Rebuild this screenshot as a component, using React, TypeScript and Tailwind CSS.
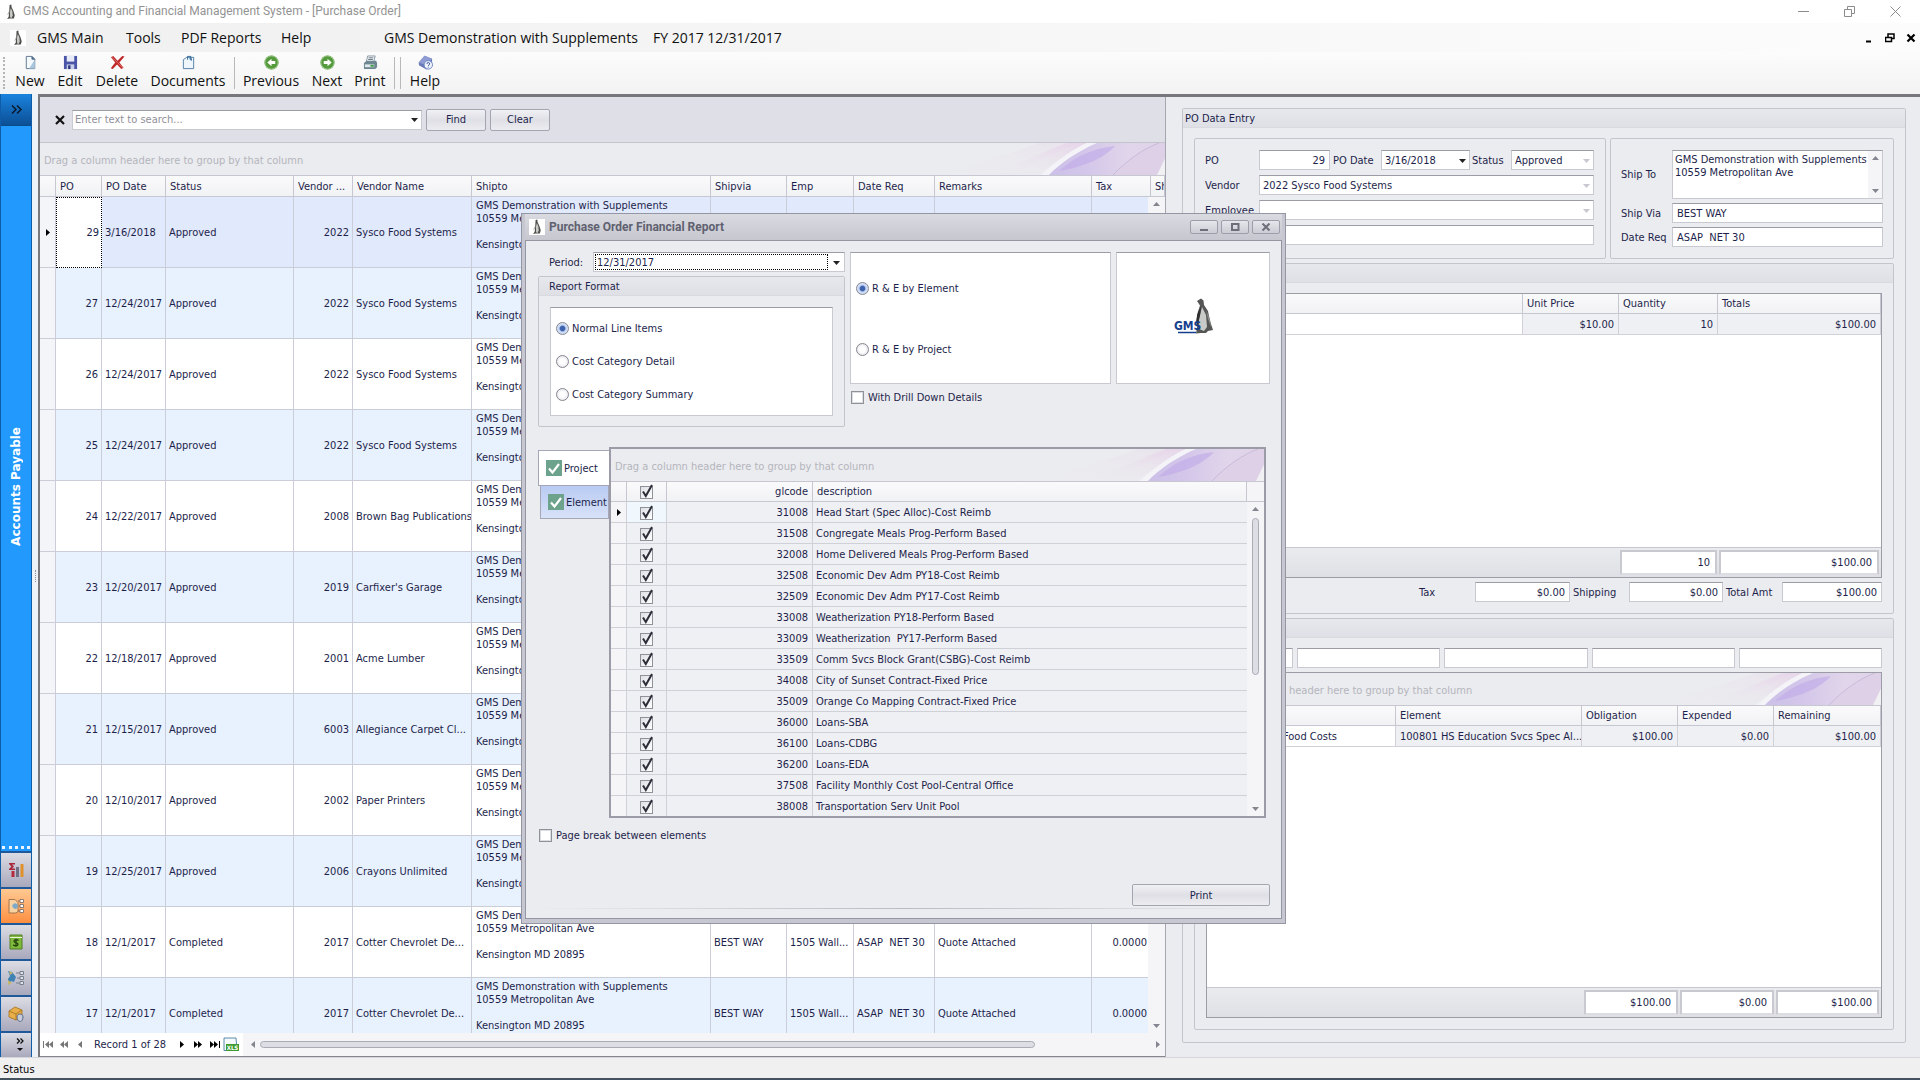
import type { ReactNode } from "react";

type Order = [string, string, string, string, string];

const orders: Order[] = [
  ["29", "3/16/2018", "Approved", "2022", "Sysco Food Systems"],
  ["27", "12/24/2017", "Approved", "2022", "Sysco Food Systems"],
  ["26", "12/24/2017", "Approved", "2022", "Sysco Food Systems"],
  ["25", "12/24/2017", "Approved", "2022", "Sysco Food Systems"],
  ["24", "12/22/2017", "Approved", "2008", "Brown Bag Publications"],
  ["23", "12/20/2017", "Approved", "2019", "Carfixer's Garage"],
  ["22", "12/18/2017", "Approved", "2001", "Acme Lumber"],
  ["21", "12/15/2017", "Approved", "6003", "Allegiance Carpet Cl..."],
  ["20", "12/10/2017", "Approved", "2002", "Paper Printers"],
  ["19", "12/25/2017", "Approved", "2006", "Crayons Unlimited"],
  ["18", "12/1/2017", "Completed", "2017", "Cotter Chevrolet De..."],
  ["17", "12/1/2017", "Completed", "2017", "Cotter Chevrolet De..."],
];

const projects: [string, string][] = [
  ["31008", "Head Start (Spec Alloc)-Cost Reimb"],
  ["31508", "Congregate Meals Prog-Perform Based"],
  ["32008", "Home Delivered Meals Prog-Perform Based"],
  ["32508", "Economic Dev Adm PY18-Cost Reimb"],
  ["32509", "Economic Dev Adm PY17-Cost Reimb"],
  ["33008", "Weatherization PY18-Perform Based"],
  ["33009", "Weatherization  PY17-Perform Based"],
  ["33509", "Comm Svcs Block Grant(CSBG)-Cost Reimb"],
  ["34008", "City of Sunset Contract-Fixed Price"],
  ["35009", "Orange Co Mapping Contract-Fixed Price"],
  ["36000", "Loans-SBA"],
  ["36100", "Loans-CDBG"],
  ["36200", "Loans-EDA"],
  ["37508", "Facility Monthly Cost Pool-Central Office"],
  ["38008", "Transportation Serv Unit Pool"],
];

const FIELD =
  "min-w-0 border border-[#c9cad1] border-t-[#9b9ca6] bg-white px-1 text-[#1d1f4b] outline-none";
const SELECT =
  "min-w-0 appearance-none border border-[#c9cad1] border-t-[#9b9ca6] bg-white pl-[3px] text-[#1d1f4b] outline-none";
const HEAD_CELL =
  "border-r border-b border-[#c6c7d0] bg-linear-to-b from-[#fafafb] to-[#f1f2f4] px-1 text-left font-normal whitespace-nowrap overflow-hidden";

function Penguin({ className = "" }: { className?: string }) {
  return (
    <svg viewBox="0 0 12 18" className={className} aria-hidden="true">
      <path d="M4.400 1.200 6.400.6 6.600 3.400 8.600 7.600l1.600 5-1 3.600H4.400L1.600 17l1.800-2.600.6-6Z" fill="#4d4d4b" />
      <path d="M5.800 4.400 7.400 8l.6 5-1.600 3L5 15l-.2-6Z" fill="#c9cac6" />
      <path d="M3.400 7.800 2 12.400l1.200-1.200Z" fill="#72726f" />
    </svg>
  );
}

function Tri({ dir, className = "" }: { dir: "up" | "down" | "left" | "right"; className?: string }) {
  const d = {
    up: "M0 5 3.5 1 7 5Z",
    down: "M0 2h7L3.5 6Z",
    left: "M5 0v7L1 3.5Z",
    right: "M2 0v7l4-3.5Z",
  }[dir];
  return (
    <svg viewBox="0 0 7 7" className={`size-[7px] shrink-0 ${className}`} aria-hidden="true">
      <path d={d} fill="currentColor" />
    </svg>
  );
}

function Swoosh() {
  return (
    <svg
      viewBox="0 0 236 33"
      preserveAspectRatio="none"
      className="h-full w-[236px]"
      aria-hidden="true"
    >
      <defs>
        <linearGradient id="pink" x1="0" x2="1" y1="1" y2="0">
          <stop offset="0" stopColor="#ebecef" stopOpacity="0" />
          <stop offset="1" stopColor="#e6cfe8" />
        </linearGradient>
        <linearGradient id="violet" x1="0" x2="1">
          <stop offset="0" stopColor="#cbbfe8" />
          <stop offset="0.35" stopColor="#d3c6ea" />
          <stop offset="0.7" stopColor="#e0d5ea" />
          <stop offset="1" stopColor="#dfd3e8" />
        </linearGradient>
      </defs>
      <path d="M0 33C50 22 84 10 110 0h40C120 12 104 22 84 33Z" fill="url(#pink)" opacity="0.3" />
      <path d="M60 33C90 22 116 8 138 0h20C140 10 126 20 108 33Z" fill="url(#pink)" opacity="0.8" />
      <path d="M114 33C132 16 150 5 164 0h72v33Z" fill="url(#violet)" />
      <path d="M112 33C130 16 146 5 158 0h10C148 9 132 20 120 33Z" fill="#f4f3f8" />
      <path d="M130 29C146 14 162 6 186 3 176 14 160 23 130 29Z" fill="#bfa9e8" opacity="0.6" />
      <path d="M184 33C198 18 214 6 230 0h6v33Z" fill="#ddd0e6" opacity="0.8" />
      <path d="M184 33C198 18 214 6 230 0" stroke="#c9b9d9" strokeWidth="1" fill="none" />
      <path d="M228 33 236 16V33Z" fill="#f1f1f4" />
    </svg>
  );
}

function GroupPanel({ pad = "pl-1" }: { pad?: string }) {
  return (
    <div className="flex h-[33px] shrink-0 items-center justify-between overflow-hidden border-b border-[#c6c7d0] bg-[#ebecef] text-[#b4b5bd]">
      <span className={`shrink-0 pt-[2px] whitespace-nowrap ${pad}`}>
        Drag a column header here to group by that column
      </span>
      <Swoosh />
    </div>
  );
}

function Group({
  title,
  className = "",
  titlePad = "pl-[2px]",
  children,
}: {
  title?: string;
  className?: string;
  titlePad?: string;
  children: ReactNode;
}) {
  return (
    <fieldset className={`min-w-0 rounded-[2px] border border-[#c3c4cc] bg-[#ebecef] ${className}`}>
      {title !== undefined && (
        <div
          className={`flex h-[19px] shrink-0 items-center border-b border-[#d9dae0] bg-linear-to-b from-[#e7e8ec] to-[#dfe0e6] ${titlePad}`}
        >
          {title}
        </div>
      )}
      {children}
    </fieldset>
  );
}

function ToolButton({
  label,
  className,
  children,
}: {
  label: string;
  className: string;
  children: ReactNode;
}) {
  return (
    <button
      type="button"
      className={`flex h-9 flex-col items-center justify-between whitespace-nowrap ${className}`}
    >
      <svg viewBox="0 0 16 16" className="size-[15px]" aria-hidden="true">
        {children}
      </svg>
      <span className="leading-5">{label}</span>
    </button>
  );
}

function Toolbar() {
  return (
    <div className="flex h-[42px] shrink-0 items-center bg-linear-to-b from-[#fcfcfc] to-[#f3f3f3] pl-[3px]">
      <div className="h-8 border-l-2 border-dotted border-[#b5b5b5]" />
      <ToolButton label="New" className="ml-[3px] w-11">
        <path d="M3.5 1.5h6l3 3v10h-9Z" fill="#f4f9fd" stroke="#5d7590" />
        <path d="M9.5 1.5v3h3Z" fill="#3d5f86" stroke="#5d7590" />
        <path d="M12.500 5v9.500h-6Z" fill="#a9c6de" />
      </ToolButton>
      <ToolButton label="Edit" className="w-9">
        <path d="M1 1h14v14H1Z" fill="#4a55a8" />
        <path d="M4 1h8v6H4Z" fill="#e8ecf8" />
        <path d="M4 10h8v5H4Z" fill="#c9cfe8" />
        <path d="M5.500 11h2.500v4H5.500Z" fill="#2b3479" />
      </ToolButton>
      <ToolButton label="Delete" className="w-[58px]">
        <path d="M1 2.500 3.500 1 8 6l5-5 2.500.5L10 8l4.500 5.500L12 15 7.500 10 3 15 .8 14 5.500 8Z" fill="#c22a2a" />
        <path d="M2 2.500 8 8l6 6" stroke="#e58080" fill="none" strokeWidth="0.8" />
      </ToolButton>
      <ToolButton label="Documents" className="ml-[2px] w-20">
        <path d="M2.500 5 6 2.500h7.500v12h-11Z" fill="#eef6fc" stroke="#4f7fa8" />
        <path d="M7 5V1.500h3.500v4M9 4h2v2" stroke="#2d6596" fill="none" />
      </ToolButton>
      <div className="mr-1 ml-[6px] h-8 border-l border-[#b9b9b9]" />
      <ToolButton label="Previous" className="w-16">
        <circle cx="8" cy="8" r="7.500" fill="#559a3c" />
        <circle cx="8" cy="8" r="7" fill="none" stroke="#9cc78c" />
        <path d="m3.500 8 4.500-4v2.500h4v3H8V12Z" fill="#fff" />
      </ToolButton>
      <ToolButton label="Next" className="ml-[2px] w-11">
        <circle cx="8" cy="8" r="7.500" fill="#559a3c" />
        <circle cx="8" cy="8" r="7" fill="none" stroke="#9cc78c" />
        <path d="M12.500 8 8 4v2.500H4v3h4V12Z" fill="#fff" />
      </ToolButton>
      <ToolButton label="Print" className="w-[42px]">
        <path d="M5 1h8l-1.500 6H3.500Z" fill="#f5f8fa" stroke="#6b7f8c" strokeWidth="0.8" />
        <path d="M1 8.500 4 6h10l1 2.500V13l-2 2H1Z" fill="#6f8791" />
        <path d="M2 10h10v3H2Z" fill="#dfe8ea" />
        <path d="M8 10.500h3.500v2H8Z" fill="#3f9a44" />
        <path d="M6 3h5M5.500 4.800h5" stroke="#3b4f5e" strokeWidth="0.8" />
      </ToolButton>
      <div className="ml-[3px] h-8 w-[7px] border-x border-[#b9b9b9]" />
      <ToolButton label="Help" className="ml-1 w-10">
        <path d="M.8 8 7 .8 15 4v7l-6 4.500L1 11Z" fill="#6779b8" />
        <path d="M.8 8 7 .8 15 4 9 11Z" fill="#8e9cd3" />
        <circle cx="11" cy="10.500" r="4.500" fill="#eef2fb" stroke="#6a86c2" />
        <path d="M9.500 9.500c0-2 3-2 3 0 0 1-1.500 1-1.500 2m0 1v.8" stroke="#2e4a9c" fill="none" />
      </ToolButton>
    </div>
  );
}

function NavButton({ active = false, label, children }: { active?: boolean; label: string; children: ReactNode }) {
  return (
    <button
      type="button"
      aria-label={label}
      className={`flex h-9 w-full shrink-0 items-center justify-center border-b-2 border-[#20599a] ${
        active
          ? "bg-linear-to-b from-[#ffc992] to-[#fd8f3e]"
          : "bg-linear-to-b from-[#dcdce4] to-[#a9a9bd]"
      }`}
    >
      <svg viewBox="0 0 16 16" className="size-4">
        {children}
      </svg>
    </button>
  );
}

function NavBar() {
  return (
    <nav className="flex w-8 shrink-0 flex-col border-x border-[#0f5da8] bg-[#2199fd]">
      <button
        type="button"
        aria-label="Expand"
        className="flex h-8 items-center justify-center border-b border-[#0b4c8a] bg-linear-to-b from-[#1b84df] to-[#0c4f96]"
      >
        <svg viewBox="0 0 11 9" className="h-[9px] w-[11px]">
          <path d="M1 .5 5 4.500 1 8.500M6 .5l4 4-4 4" stroke="#0a1626" strokeWidth="1.400" fill="none" />
        </svg>
      </button>
      <div className="flex min-h-0 flex-1 items-center justify-center">
        <span className="rotate-180 font-['DejaVu_Sans',sans-serif] text-[12px] font-bold whitespace-nowrap text-white [writing-mode:vertical-rl]">
          Accounts Payable
        </span>
      </div>
      <div className="mx-px mb-[2px] border-t-[3px] border-dotted border-white/90" />
      <div className="border-t-2 border-[#20599a]">
        <NavButton label="Reports">
          <path d="M1 1h6v1.500H4l2 2-2 2h3V8H1V7l2.500-2.500L1 2Z" fill="#a8283a" />
          <path d="M3.500 9h3v6h-3Z" fill="#b42b3e" />
          <path d="M8 5h3v10H8Z" fill="#6f6f86" />
          <path d="M12.500 2h3v13h-3Z" fill="#e0912b" />
        </NavButton>
        <NavButton label="Accounts Payable" active>
          <path d="M1 1.500h6l3 3v9L8 15H1Z" fill="#f8d2a0" stroke="#a5744a" />
          <path d="M4 8c2-4 5-3 6 0-1 4-4 4-6 0Z" fill="#7fa9c9" />
          <path d="M10 3h2m-1 5h1m-2 5h2" stroke="#8c6a55" />
          <path d="M12 1.500h3.500v3H12ZM12 6.500h3.500v3H12ZM12 11.500h3.500v3H12Z" fill="#fff" stroke="#8c7a70" />
        </NavButton>
        <NavButton label="Cash">
          <path d="M2 1h12v14H2Z" fill="#7fb93b" stroke="#4f7d24" />
          <path d="M2 3.500h12" stroke="#e8f3d5" />
          <path d="M10.500 6.500C9 5 6 5.500 6 7.200 6 9 10 8.300 10 10.300c0 2-3.500 2-4.800.5M8 4.800v8" stroke="#22430e" fill="none" strokeWidth="1.300" />
        </NavButton>
        <NavButton label="Transfers">
          <path d="M0 1 4 2l4 5-2 5-3-1-3 4V9l2-3Z" fill="#3f83b5" />
          <path d="M0 10 4 13 0 15ZM1 1l4 2-3 2Z" fill="#c8b66a" />
          <path d="M8 3h4M9 8h3M8 13h4" stroke="#77808c" />
          <path d="M12 1.500h3.500v3H12ZM12 6.500h3.500v3H12ZM12 11.500h3.500v3H12Z" fill="#dfe1e8" stroke="#77808c" />
        </NavButton>
        <NavButton label="Inventory">
          <path d="M1 5 7 1l7 3v6l-6 4-7-3Z" fill="#e8ae49" stroke="#a36f1d" strokeWidth="0.8" />
          <path d="m1 5 7 3 6-4M8 8v6" stroke="#a36f1d" fill="none" strokeWidth="0.8" />
          <path d="M9 11c0-4 6-4 6 0 0 3-2 5-3 4.500-2-.5-3-2-3-4.500Z" fill="#c7cdd8" stroke="#5b6b88" />
        </NavButton>
        <button
          type="button"
          aria-label="More"
          className="flex h-[24px] w-full items-center justify-center bg-linear-to-b from-[#dcdce4] to-[#a9a9bd] pl-2"
        >
          <svg viewBox="0 0 8 14" className="h-[14px] w-2">
            <path d="M1 .5 3.500 3 1 5.500M4.500.5 7 3 4.500 5.500" stroke="#111" strokeWidth="1.300" fill="none" />
            <path d="M1 10h6L4 13Z" fill="#111" />
          </svg>
        </button>
      </div>
    </nav>
  );
}

function OrderGrid() {
  return (
    <div className="relative min-h-0 flex-1 overflow-hidden bg-white">
      <table className="w-full table-fixed border-separate border-spacing-0">
        <colgroup>
          <col className="w-4" />
          <col className="w-[46px]" />
          <col className="w-16" />
          <col className="w-32" />
          <col className="w-[59px]" />
          <col className="w-[119px]" />
          <col className="w-[239px]" />
          <col className="w-[76px]" />
          <col className="w-[67px]" />
          <col className="w-[81px]" />
          <col />
          <col className="w-[59px]" />
          <col className="w-[14px]" />
        </colgroup>
        <thead>
          <tr className="h-[21px]">
            {["", "PO", "PO Date", "Status", "Vendor ...", "Vendor Name", "Shipto", "Shipvia", "Emp", "Date Req", "Remarks", "Tax", "Sh"].map(
              (h, i) => (
                <th key={i} scope="col" className={HEAD_CELL}>
                  {h}
                </th>
              ),
            )}
          </tr>
        </thead>
        <tbody>
          {orders.map((o, i) => {
            const bg = i === 0 ? "bg-[#e1e9fc]" : i % 2 ? "bg-[#e8f1fe]" : "bg-white";
            const cell = "border-r border-b border-[#cbced8] px-[3px] whitespace-nowrap";
            return (
              <tr key={o[0]} className={`h-[71px] ${bg}`}>
                <td className="border-r border-b border-[#cbced8] bg-[#f4f5f8] pl-1">
                  {i === 0 && <Tri dir="right" className="text-black" />}
                </td>
                <td
                  className={`text-right whitespace-nowrap ${
                    i === 0
                      ? "border border-dotted border-black bg-white px-[2px]"
                      : "border-r border-b border-[#cbced8] px-[3px]"
                  }`}
                >
                  {o[0]}
                </td>
                <td className={cell}>{o[1]}</td>
                <td className={cell}>{o[2]}</td>
                <td className={`${cell} text-right`}>{o[3]}</td>
                <td className={`${cell} overflow-hidden`}>{o[4]}</td>
                <td className={`${cell} pl-1 align-top leading-[13px]`}>
                  <div className="pt-[2px]">GMS Demonstration with Supplements</div>
                  <div>10559 Metropolitan Ave</div>
                  <div className="mt-[13px]">Kensington MD 20895</div>
                </td>
                <td className={cell}>BEST WAY</td>
                <td className={cell}>1505 Wall...</td>
                <td className={`${cell} whitespace-pre`}>{"ASAP  NET 30"}</td>
                <td className={cell}>Quote Attached</td>
                <td className={`${cell} text-right`}>0.0000</td>
                <td className={cell} />
              </tr>
            );
          })}
        </tbody>
      </table>
      <div className="absolute top-[21px] right-0 bottom-0 flex w-[17px] flex-col items-center justify-between bg-[#f5f5f8] py-1 text-[#84868f]">
        <Tri dir="up" />
        <Tri dir="down" />
      </div>
    </div>
  );
}

function Navigator() {
  return (
    <div className="flex h-[23px] shrink-0 items-center bg-[#f5f5f8]">
      <div className="flex h-full items-center bg-white pl-[3px] text-black">
        <button type="button" aria-label="First record" className="flex w-4 items-center text-[#777]">
          <span className="h-[7px] w-px bg-[#777]" />
          <Tri dir="left" className="-mr-[3px]" />
          <Tri dir="left" />
        </button>
        <button type="button" aria-label="Previous page" className="flex w-[18px] items-center text-[#777]">
          <Tri dir="left" className="-mr-[3px]" />
          <Tri dir="left" />
        </button>
        <button type="button" aria-label="Previous record" className="flex w-[17px] items-center text-[#777]">
          <Tri dir="left" />
        </button>
        <span className="w-[84px] whitespace-nowrap text-[#1d1f4b]">Record 1 of 28</span>
        <button type="button" aria-label="Next record" className="flex w-[14px] items-center">
          <Tri dir="right" />
        </button>
        <button type="button" aria-label="Next page" className="flex w-4 items-center">
          <Tri dir="right" className="-mr-[3px]" />
          <Tri dir="right" />
        </button>
        <button type="button" aria-label="Last record" className="flex items-center">
          <Tri dir="right" className="-mr-[3px]" />
          <Tri dir="right" />
          <span className="h-[7px] w-px bg-black" />
        </button>
        <button type="button" aria-label="Export to XLS" className="mr-1 ml-[3px]">
          <svg viewBox="0 0 16 16" className="size-4">
            <path d="M1 1h12l1 12.500H1Z" fill="#f4fafc" stroke="#5a8aa8" />
            <path d="M3 7h13v7H3Z" fill="#3c9a2e" />
            <text x="9.500" y="13" textAnchor="middle" className="fill-white text-[6px] font-bold">
              XLS
            </text>
          </svg>
        </button>
      </div>
      <div className="flex min-w-0 flex-1 items-center pr-1 pl-[7px] text-[#84868f]">
        <Tri dir="left" />
        <div className="min-w-0 flex-1 px-[3px]">
          <div className="h-[7px] w-[87%] rounded-full border border-[#a9abb5] bg-[#dddee4]" />
        </div>
        <Tri dir="right" />
      </div>
    </div>
  );
}

function Field({
  label,
  value,
  className = "",
}: {
  label: string;
  value?: string;
  className?: string;
}) {
  return <input aria-label={label} defaultValue={value} className={`h-5 ${FIELD} ${className}`} />;
}

function Pick({ label, value, className = "", dark = false }: { label: string; value: string; className?: string; dark?: boolean }) {
  return (
    <div className={`grid h-5 min-w-0 items-center ${className}`}>
      <select aria-label={label} defaultValue={value} className={`col-start-1 row-start-1 h-5 w-full ${SELECT}`}>
        <option>{value}</option>
      </select>
      <Tri
        dir="down"
        className={`pointer-events-none col-start-1 row-start-1 mr-1 justify-self-end ${dark ? "text-[#222]" : "text-[#c8c9d0]"}`}
      />
    </div>
  );
}

const TOTAL_CELL =
  "flex items-center justify-end border-2 border-[#c9cad1] border-b-[#dcdde2] bg-white pr-[5px]";

function DataEntry() {
  const num = "border-r border-b border-[#d0d1d9] bg-[#eff0f3] py-0 pr-1 text-right";
  return (
    <section className="flex w-[755px] shrink-0 flex-col border-l border-[#a5a6b0] bg-[#ebecef] pt-[11px] pr-[14px] pb-[14px] pl-4">
      <Group title="PO Data Entry" className="flex min-h-0 flex-1 flex-col">
        <div className="flex min-h-0 flex-1 flex-col gap-1 px-[11px] pt-[10px] pb-3">
          <div className="flex h-[121px] shrink-0 gap-1">
            <Group className="flex w-[412px] shrink-0 flex-col gap-[5px] pt-[11px] pr-[11px] pl-[10px]">
              <div className="flex items-center">
                <span className="w-[54px] shrink-0">PO</span>
                <Field label="PO" value="29" className="w-[71px] text-right" />
                <span className="ml-[3px] w-12 whitespace-nowrap">PO Date</span>
                <Pick label="PO Date" value="3/16/2018" dark className="w-[89px]" />
                <span className="ml-[2px] w-[39px]">Status</span>
                <Pick label="Status" value="Approved" className="flex-1" />
              </div>
              <div className="flex items-center">
                <span className="w-[54px] shrink-0">Vendor</span>
                <Pick label="Vendor" value="2022 Sysco Food Systems" className="flex-1" />
              </div>
              <div className="flex items-center">
                <span className="w-[54px] shrink-0">Employee</span>
                <Pick label="Employee" value="" className="flex-1" />
              </div>
              <div className="flex items-center">
                <span className="w-[54px] shrink-0">Remarks</span>
                <Field label="Remarks" value="" className="flex-1" />
              </div>
            </Group>
            <Group className="flex flex-1 flex-col gap-1 pt-[11px] pr-[10px] pl-[10px]">
              <div className="flex items-center">
                <span className="w-[51px] shrink-0">Ship To</span>
                <div className="flex h-[49px] min-w-0 flex-1 border border-[#c9cad1] border-t-[#9b9ca6] bg-white">
                  <textarea
                    aria-label="Ship To"
                    className="h-full min-w-0 flex-1 resize-none overflow-hidden pt-[2px] pl-[2px] leading-[13px] whitespace-pre text-[#1d1f4b] outline-none"
                    defaultValue={"GMS Demonstration with Supplements\n10559 Metropolitan Ave"}
                  />
                  <div className="flex w-[14px] flex-col items-center justify-between bg-[#f5f5f8] py-1 text-[#84868f]">
                    <Tri dir="up" />
                    <Tri dir="down" />
                  </div>
                </div>
              </div>
              <div className="flex items-center">
                <span className="w-[51px] shrink-0">Ship Via</span>
                <Field label="Ship Via" value="BEST WAY" className="flex-1" />
              </div>
              <div className="flex items-center">
                <span className="w-[51px] shrink-0 whitespace-nowrap">Date Req</span>
                <Field label="Date Req" value="ASAP  NET 30" className="flex-1" />
              </div>
            </Group>
          </div>

          <Group title="" className="flex h-[351px] shrink-0 flex-col">
            <div className="flex flex-1 flex-col px-[11px] pt-[10px]">
              <div className="flex h-[285px] flex-col border border-[#9b9ca6] bg-white">
                <table className="w-full table-fixed border-separate border-spacing-0">
                  <colgroup>
                    <col />
                    <col className="w-24" />
                    <col className="w-[99px]" />
                    <col className="w-[163px]" />
                  </colgroup>
                  <thead>
                    <tr className="h-5">
                      <th scope="col" className={HEAD_CELL} />
                      <th scope="col" className={HEAD_CELL}>Unit Price</th>
                      <th scope="col" className={HEAD_CELL}>Quantity</th>
                      <th scope="col" className={HEAD_CELL}>Totals</th>
                    </tr>
                  </thead>
                  <tbody>
                    <tr className="h-[21px]">
                      <td className="border-r border-b border-[#d0d1d9]" />
                      <td className={num}>$10.00</td>
                      <td className={num}>10</td>
                      <td className={num}>$100.00</td>
                    </tr>
                  </tbody>
                </table>
                <div className="mt-auto flex h-[30px] justify-end gap-[2px] border-t border-[#c6c7d0] bg-linear-to-b from-[#eaebee] to-[#dfe0e5] py-[2px] pr-[2px]">
                  <div className={`w-[97px] ${TOTAL_CELL}`}>10</div>
                  <div className={`w-[160px] ${TOTAL_CELL}`}>$100.00</div>
                </div>
              </div>
              <div className="flex items-center justify-end pt-1">
                <span className="w-[56px]">Tax</span>
                <Field label="Tax" value="$0.00" className="w-[95px] text-right" />
                <span className="ml-[3px] w-14">Shipping</span>
                <Field label="Shipping" value="$0.00" className="w-[94px] text-right" />
                <span className="ml-[3px] w-14 whitespace-nowrap">Total Amt</span>
                <Field label="Total Amt" value="$100.00" className="w-[100px] text-right" />
              </div>
            </div>
          </Group>

          <Group title="" className="flex min-h-0 flex-1 flex-col">
            <div className="flex min-h-0 flex-1 flex-col gap-1 px-[11px] pt-[10px] pb-[11px]">
              <div className="flex shrink-0 gap-1">
                <Field label="Account" className="w-[87px]" />
                <Field label="Segment 1" className="flex-1" />
                <Field label="Segment 2" className="flex-1" />
                <Field label="Segment 3" className="flex-1" />
                <Field label="Segment 4" className="flex-1" />
              </div>
              <div className="flex min-h-0 flex-1 flex-col border border-[#9b9ca6] bg-white">
                <GroupPanel pad="pl-[6px]" />
                <table className="w-full table-fixed border-separate border-spacing-0">
                  <colgroup>
                    <col />
                    <col className="w-[186px]" />
                    <col className="w-24" />
                    <col className="w-24" />
                    <col className="w-[107px]" />
                  </colgroup>
                  <thead>
                    <tr className="h-5">
                      <th scope="col" className={HEAD_CELL} />
                      <th scope="col" className={HEAD_CELL}>Element</th>
                      <th scope="col" className={HEAD_CELL}>Obligation</th>
                      <th scope="col" className={HEAD_CELL}>Expended</th>
                      <th scope="col" className={HEAD_CELL}>Remaining</th>
                    </tr>
                  </thead>
                  <tbody>
                    <tr className="h-[21px]">
                      <td className="border-r border-b border-[#d0d1d9] py-0 pr-[58px] text-right">Food Costs</td>
                      <td className="overflow-hidden border-r border-b border-[#d0d1d9] bg-[#eff0f3] py-0 pl-1 whitespace-nowrap">
                        100801 HS Education Svcs Spec Al...
                      </td>
                      <td className={num}>$100.00</td>
                      <td className={num}>$0.00</td>
                      <td className={num}>$100.00</td>
                    </tr>
                  </tbody>
                </table>
                <div className="mt-auto flex h-[30px] shrink-0 justify-end gap-[2px] border-t border-[#c6c7d0] bg-linear-to-b from-[#eaebee] to-[#dfe0e5] py-[2px] pr-[2px]">
                  <div className={`w-[94px] ${TOTAL_CELL}`}>$100.00</div>
                  <div className={`w-[94px] ${TOTAL_CELL}`}>$0.00</div>
                  <div className={`w-[103px] ${TOTAL_CELL}`}>$100.00</div>
                </div>
              </div>
            </div>
          </Group>
        </div>
      </Group>
    </section>
  );
}

function Radio({ name, label, checked = false }: { name: string; label: string; checked?: boolean }) {
  return (
    <label className="flex items-center gap-[3px] whitespace-nowrap">
      <input
        type="radio"
        name={name}
        defaultChecked={checked}
        className="size-[13px] shrink-0 appearance-none rounded-full border border-[#85878f] bg-[radial-gradient(circle,#ffffff_35%,#d5d7dd_100%)] checked:bg-[radial-gradient(circle,#3d62ad_28%,#c5d5f3_45%,#e9effb_100%)]"
      />
      {label}
    </label>
  );
}

function EmptyCheck({ label }: { label: string }) {
  return (
    <label className="flex items-center gap-1 whitespace-nowrap">
      <input
        type="checkbox"
        className="size-[13px] shrink-0 appearance-none border border-[#8f9199] bg-white shadow-[inset_0_0_0_1px_#dcdde2]"
      />
      {label}
    </label>
  );
}

function GridCheck({ label }: { label: string }) {
  return (
    <span className="mx-auto grid h-[15px] w-[14px]">
      <input
        type="checkbox"
        aria-label={label}
        defaultChecked
        className="col-start-1 row-start-1 h-[13px] w-[13px] appearance-none self-end border border-[#8f9199] bg-linear-to-br from-[#dfe0e5] to-white"
      />
      <svg viewBox="0 0 14 15" className="pointer-events-none col-start-1 row-start-1 h-[15px] w-[14px]">
        <path d="M3 7.500 5.800 12 12 1" stroke="#2c2d38" strokeWidth="2" fill="none" />
      </svg>
    </span>
  );
}

function Tab({ label, active = false }: { label: string; active?: boolean }) {
  return (
    <button
      type="button"
      role="tab"
      aria-selected={active}
      className={`flex items-center gap-[2px] border border-[#a5a7b8] ${
        active
          ? "h-9 w-[72px] border-r-0 bg-white pl-[7px]"
          : "-mt-px ml-[2px] h-[34px] w-[69px] bg-linear-to-b from-[#b9cbf3] to-[#d8e2f8] pl-[7px]"
      }`}
    >
      <svg viewBox="0 0 16 16" className="size-4 shrink-0" aria-hidden="true">
        <path d="M0 0h16v16H0Z" fill="#6da28c" />
        <path d="m3 8.500 3.500 4L13 4" stroke="#fff" strokeWidth="2.200" fill="none" />
      </svg>
      {label}
    </button>
  );
}

function ProjectGrid() {
  const line = "border-r border-b border-[#cfd0d8]";
  return (
    <div className="flex h-[371px] min-w-0 flex-1 flex-col overflow-hidden border-2 border-[#9b9ca8] bg-[#eff0f3]">
      <GroupPanel />
      <div className="flex min-h-0 flex-1">
        <table className="min-w-0 flex-1 table-fixed border-separate border-spacing-0 self-start">
          <colgroup>
            <col className="w-4" />
            <col className="w-10" />
            <col className="w-[146px]" />
            <col />
          </colgroup>
          <thead>
            <tr className="h-5">
              <th className={HEAD_CELL} />
              <th scope="col" className={`${HEAD_CELL} py-0`}>
                <GridCheck label="Select all" />
              </th>
              <th scope="col" className={`${HEAD_CELL} text-right`}>glcode</th>
              <th scope="col" className={HEAD_CELL}>description</th>
            </tr>
          </thead>
          <tbody>
            {projects.map(([code, name], i) => (
              <tr key={code} className="h-[21px]">
                <td className={`${line} bg-[#f5f5f8] pl-1`}>
                  {i === 0 && <Tri dir="right" className="text-black" />}
                </td>
                <td className={`${line} p-0 ${i === 0 ? "bg-[#f0f8fe]" : ""}`}>
                  <GridCheck label={name} />
                </td>
                <td className={`${line} pr-1 text-right`}>{code}</td>
                <td className="border-b border-[#cfd0d8] pl-[3px] whitespace-pre">{name}</td>
              </tr>
            ))}
          </tbody>
        </table>
        <div className="flex w-[17px] shrink-0 flex-col items-center bg-[#f5f5f8] text-[#84868f]">
          <div className="h-5 w-full border-b border-[#c6c7d0]" />
          <Tri dir="up" className="mt-1" />
          <div className="mt-[5px] h-[157px] w-[7px] shrink-0 rounded-full border border-[#a9abb5] bg-[#dddee4]" />
          <Tri dir="down" className="mt-auto mb-1" />
        </div>
      </div>
    </div>
  );
}

function WindowButton({ label, children }: { label: string; children: ReactNode }) {
  return (
    <button
      type="button"
      aria-label={label}
      className="flex h-[14px] w-7 items-center justify-center rounded-[2px] border border-[#9c9eaa] bg-linear-to-b from-[#e6e7eb] to-[#cbccd4]"
    >
      <svg viewBox="0 0 10 8" className="h-2 w-[10px]">
        {children}
      </svg>
    </button>
  );
}

const BUTTON =
  "flex items-center justify-center rounded-[2px] border border-[#a3a5b1] bg-linear-to-b from-[#f1f1f4] via-[#dfe0e6] to-[#ececf0]";

function ReportDialog() {
  return (
    <div
      role="dialog"
      aria-label="Purchase Order Financial Report"
      className="absolute top-[213px] left-[521px] w-[765px] border border-[#9496a3] bg-[#c6c7d0] px-[3px] pb-1"
    >
      <div className="flex h-[26px] items-center bg-linear-to-b from-[#dadbe1] to-[#c6c7cf]">
        <span className="ml-1 bg-white">
          <Penguin className="h-4 w-4" />
        </span>
        <span className="ml-1 flex-1 font-[Roboto,sans-serif] text-[12px] font-bold text-[#5f6170]">
          Purchase Order Financial Report
        </span>
        <div className="flex gap-[3px] pr-[2px]">
          <WindowButton label="Minimize">
            <path d="M1 6h8v2H1Z" fill="#6c6e7a" />
          </WindowButton>
          <WindowButton label="Maximize">
            <path d="M2 1h6.500v6H2Z" fill="none" stroke="#6c6e7a" strokeWidth="2" />
          </WindowButton>
          <WindowButton label="Close">
            <path d="m1.500.5 7 7m0-7-7 7" stroke="#6c6e7a" strokeWidth="2" />
          </WindowButton>
        </div>
      </div>
      <div className="border border-[#9496a3] bg-[#ebecef] pt-[11px] pr-[11px] pb-[9px] pl-3">
        <div className="flex gap-[5px]">
          <div className="w-[307px]">
            <div className="flex h-5 items-center">
              <label htmlFor="period" className="w-[55px] pl-[11px]">
                Period:
              </label>
              <div className="grid h-5 flex-1 items-center border border-[#c9cad1] border-t-[#9b9ca6] bg-white">
                <select
                  id="period"
                  defaultValue="12/31/2017"
                  className="col-start-1 row-start-1 mr-4 ml-px h-4 appearance-none border border-dotted border-black pl-px text-[#1d1f4b] outline-none"
                >
                  <option>12/31/2017</option>
                </select>
                <Tri dir="down" className="pointer-events-none col-start-1 row-start-1 mr-1 justify-self-end text-[#222]" />
              </div>
            </div>
            <Group title="Report Format" titlePad="pl-[10px]" className="mt-1 h-[151px]">
              <div className="mx-[11px] mt-[11px] flex h-[109px] flex-col justify-between border border-[#c9cad1] border-t-[#9b9ca6] bg-white py-[14px] pl-[5px]">
                <Radio name="format" label="Normal Line Items" checked />
                <Radio name="format" label="Cost Category Detail" />
                <Radio name="format" label="Cost Category Summary" />
              </div>
            </Group>
          </div>
          <div className="w-[261px]">
            <div className="flex h-[132px] flex-col gap-12 border border-[#c9cad1] border-t-[#9b9ca6] bg-white pt-[29px] pl-[5px]">
              <Radio name="by" label="R & E by Element" checked />
              <Radio name="by" label="R & E by Project" />
            </div>
            <div className="pt-[7px] pl-px">
              <EmptyCheck label="With Drill Down Details" />
            </div>
          </div>
          <div className="flex h-[132px] min-w-0 flex-1 items-center justify-center border border-[#c9cad1] border-t-[#9b9ca6] bg-white pb-1">
            <svg viewBox="0 0 40 36" className="h-9 w-10" role="img" aria-label="GMS">
              <path d="M24 3 28 .5l2.500 2L31 7l4 6 2 10 3 9-5 1-2 2h-5l-5 .5 1-6-1-7 2-9 2-6Z" fill="#555754" />
              <path d="m29 9 4 8 1 12-3 4-5-2v-9Z" fill="#c9cbc8" />
              <path d="m28 8-4 9v12l3-12Z" fill="#2e2f2e" />
              <path d="m33 12 4 9 1 8-3-8Z" fill="#8a8c89" />
              <text
                x="1"
                y="32"
                className="fill-[#153f8e] font-['DejaVu_Sans_Condensed',sans-serif] text-[12px] font-bold"
              >
                GMS
              </text>
              <path d="M5 34.500h18" stroke="#153f8e" strokeWidth="1.500" />
            </svg>
          </div>
        </div>

        <div className="mt-5 flex">
          <div role="tablist" aria-orientation="vertical" className="w-[71px] shrink-0 pt-[3px]">
            <Tab label="Project" active />
            <Tab label="Element" />
          </div>
          <div className="flex min-w-0 flex-1 pr-1">
            <ProjectGrid />
          </div>
        </div>

        <div className="pt-[11px] pl-px">
          <EmptyCheck label="Page break between elements" />
        </div>
        <div className="mt-[42px] flex justify-end">
          <button type="button" className={`h-[22px] w-[138px] ${BUTTON}`}>
            Print
          </button>
        </div>
        <div className="mt-[2px] h-px bg-linear-to-r from-transparent via-[#b9bac3] to-transparent" />
      </div>
    </div>
  );
}

export default function App() {
  return (
    <div className="relative flex h-screen flex-col overflow-hidden bg-[#f3f3f5] font-['DejaVu_Sans_Condensed',sans-serif] text-[11px] leading-[13px] text-[#1d1f4b]">
      <header className="flex h-[23px] shrink-0 items-center bg-white font-[Roboto,sans-serif] text-[12px] text-[#939393]">
        <Penguin className="ml-1 h-4 w-[14px]" />
        <h1 className="ml-[5px] flex-1">GMS Accounting and Financial Management System - [Purchase Order]</h1>
        <div className="flex gap-[35px] pr-[19px]">
          {[
            ["Minimize", "M0 5.500h11"],
            ["Restore", "M.5 3.500h7v7h-7ZM3.500 3V.5h7v7H8"],
            ["Close", "m.5.5 10 10m0-10-10 10"],
          ].map(([label, d]) => (
            <button key={label} type="button" aria-label={label}>
              <svg viewBox="0 0 11 11" className="size-[11px]">
                <path d={d} stroke="#8c8c8c" fill="none" />
              </svg>
            </button>
          ))}
        </div>
      </header>

      <div className="flex h-[29px] shrink-0 items-center bg-linear-to-r from-[#f0f0f0] to-[#fcfcfc] font-['Open_Sans',sans-serif] text-[14px] text-[#111]">
        <span className="ml-[10px] bg-white">
          <Penguin className="h-4 w-4" />
        </span>
        <nav className="flex">
          <button type="button" className="ml-[11px] w-[89px] text-left whitespace-nowrap">GMS Main</button>
          <button type="button" className="w-[55px] text-left">Tools</button>
          <button type="button" className="w-[100px] text-left whitespace-nowrap">PDF Reports</button>
          <button type="button" className="w-[103px] text-left">Help</button>
        </nav>
        <span className="w-[269px] whitespace-nowrap">GMS Demonstration with Supplements</span>
        <span className="flex-1 whitespace-nowrap">FY 2017 12/31/2017</span>
        <div className="flex gap-[11px] pr-[4px]">
          {[
            ["Minimize child", "M2 8.500h5", 2],
            ["Restore child", "M.500 4.500h6v4h-6ZM3 4V1h6v4.500H7", 1.5],
            ["Close child", "m1.500 1.500 7 7m0-7-7 7", 2.2],
          ].map(([label, d, w]) => (
            <button key={label} type="button" aria-label={String(label)}>
              <svg viewBox="0 0 10 10" className="size-[10px]">
                <path d={String(d)} stroke="#000" strokeWidth={w} fill="none" />
              </svg>
            </button>
          ))}
        </div>
      </div>

      <div className="shrink-0 font-['Open_Sans',sans-serif] text-[14px] text-[#111]">
        <Toolbar />
      </div>

      <div className="flex min-h-0 flex-1">
        <NavBar />
        <div className="flex w-[6px] shrink-0 items-center justify-center bg-[#edf1f8] text-[#8b8d99]">
          <span className="h-3 border-l border-dotted border-current" />
        </div>
        <div className="flex min-w-0 flex-1 border-t-[3px] border-l-2 border-[#77777c]">
          <main className="flex min-w-0 flex-1 flex-col overflow-hidden border-b border-[#85868e]">
            <div className="flex h-[46px] shrink-0 items-center border-b border-[#c3c4cc] bg-[#dfe0e7] pl-[15px]">
              <button type="button" aria-label="Close search" className="mr-[7px]">
                <svg viewBox="0 0 10 10" className="size-[10px]">
                  <path d="m1 1 8 8m0-8-8 8" stroke="#111" strokeWidth="2.200" />
                </svg>
              </button>
              <div className="grid w-[350px] items-center">
                <input
                  aria-label="Search"
                  placeholder="Enter text to search..."
                  className="col-start-1 row-start-1 h-5 w-full border border-[#c9cad1] border-t-[#9b9ca6] bg-white px-[2px] outline-none placeholder:text-[#8f909a]"
                />
                <Tri dir="down" className="pointer-events-none col-start-1 row-start-1 mr-1 justify-self-end text-[#222]" />
              </div>
              <button type="button" className={`ml-1 h-[22px] w-[60px] ${BUTTON}`}>Find</button>
              <button type="button" className={`ml-1 h-[22px] w-[60px] ${BUTTON}`}>Clear</button>
            </div>
            <GroupPanel />
            <OrderGrid />
            <Navigator />
          </main>
          <DataEntry />
        </div>
      </div>

      <footer className="flex h-[23px] shrink-0 items-center border-t border-b-2 border-t-[#d6d6da] border-b-[#43525e] bg-[#f0f0f0] pt-[2px] pl-[3px] text-black">
        Status
      </footer>

      <ReportDialog />
    </div>
  );
}
